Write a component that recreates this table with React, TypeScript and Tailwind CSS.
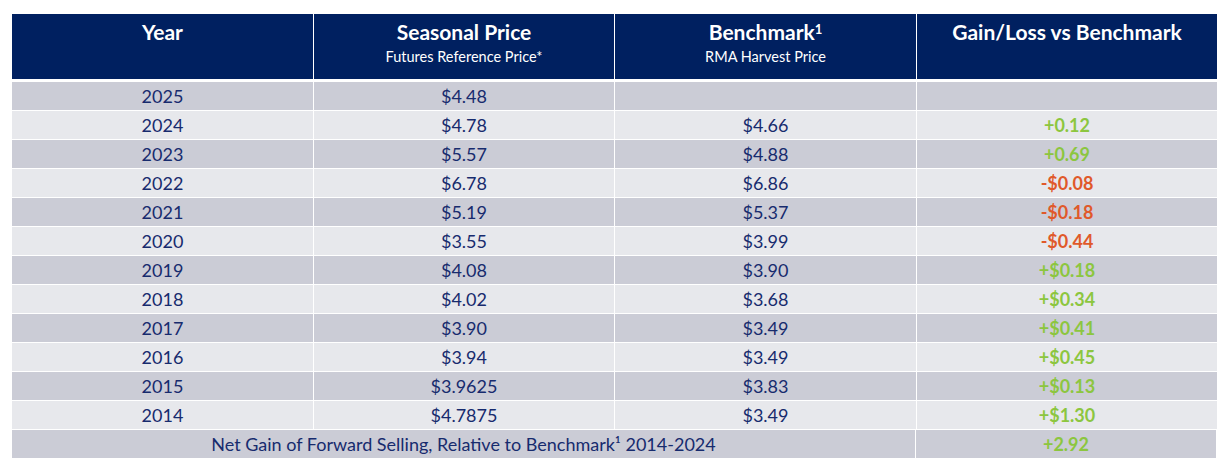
import React from 'react'

type Row = {
  year: string
  seasonal: string
  bench: string
  diff: string
  loss?: boolean
}

const rows: Row[] = [
  { year: '2025', seasonal: '$4.48', bench: '', diff: '' },
  { year: '2024', seasonal: '$4.78', bench: '$4.66', diff: '+0.12' },
  { year: '2023', seasonal: '$5.57', bench: '$4.88', diff: '+0.69' },
  { year: '2022', seasonal: '$6.78', bench: '$6.86', diff: '-$0.08', loss: true },
  { year: '2021', seasonal: '$5.19', bench: '$5.37', diff: '-$0.18', loss: true },
  { year: '2020', seasonal: '$3.55', bench: '$3.99', diff: '-$0.44', loss: true },
  { year: '2019', seasonal: '$4.08', bench: '$3.90', diff: '+$0.18' },
  { year: '2018', seasonal: '$4.02', bench: '$3.68', diff: '+$0.34' },
  { year: '2017', seasonal: '$3.90', bench: '$3.49', diff: '+$0.41' },
  { year: '2016', seasonal: '$3.94', bench: '$3.49', diff: '+$0.45' },
  { year: '2015', seasonal: '$3.9625', bench: '$3.83', diff: '+$0.13' },
  { year: '2014', seasonal: '$4.7875', bench: '$3.49', diff: '+$1.30' },
]

const cols = 'grid grid-cols-[301px_300px_301px_300px] gap-x-px'

export default function App() {
  return (
    <div className="w-[1226px] h-[475px] bg-white pt-[14px] pl-[12px] font-['Lato',sans-serif]">
      <div className="w-[1205px]">
        {/* Header */}
        <div className={`${cols} h-[65px]`}>
          <div className="bg-[#002060] text-white text-center pt-[4px]">
            <div className="text-[21px] font-bold leading-[28px]">Year</div>
          </div>
          <div className="bg-[#002060] text-white text-center pt-[4px]">
            <div className="text-[21px] font-bold leading-[28px]">Seasonal Price</div>
            <div className="text-[14.5px] leading-[22px]">Futures Reference Price*</div>
          </div>
          <div className="bg-[#002060] text-white text-center pt-[4px]">
            <div className="text-[21px] font-bold leading-[28px]">
              Benchmark<sup className="text-[13px]">1</sup>
            </div>
            <div className="text-[14.5px] leading-[22px]">RMA Harvest Price</div>
          </div>
          <div className="bg-[#002060] text-white text-center pt-[4px]">
            <div className="text-[21px] font-bold leading-[28px]">Gain/Loss vs Benchmark</div>
          </div>
        </div>

        {/* Body */}
        <div className="mt-[3px] flex flex-col gap-y-px text-[18px] text-[#172b6e]">
          {rows.map((r, i) => {
            const bg = i % 2 === 0 ? 'bg-[#cbccd6]' : 'bg-[#e7e8ec]'
            return (
              <div key={r.year} className={`${cols} h-[28px]`}>
                <div className={`${bg} flex items-center justify-center`}>{r.year}</div>
                <div className={`${bg} flex items-center justify-center`}>{r.seasonal}</div>
                <div className={`${bg} flex items-center justify-center`}>{r.bench}</div>
                <div
                  className={`${bg} flex items-center justify-center font-bold ${
                    r.loss ? 'text-[#e0592a]' : 'text-[#8cc63f]'
                  }`}
                >
                  {r.diff}
                </div>
              </div>
            )
          })}
          <div className="grid grid-cols-[903px_300px] gap-x-px h-[28px]">
            <div className="bg-[#cbccd6] flex items-center justify-center">
              Net Gain of Forward Selling, Relative to Benchmark¹ 2014-2024
            </div>
            <div className="bg-[#cbccd6] flex items-center justify-center font-bold text-[#8cc63f]">
              +2.92
            </div>
          </div>
        </div>
      </div>
    </div>
  )
}
